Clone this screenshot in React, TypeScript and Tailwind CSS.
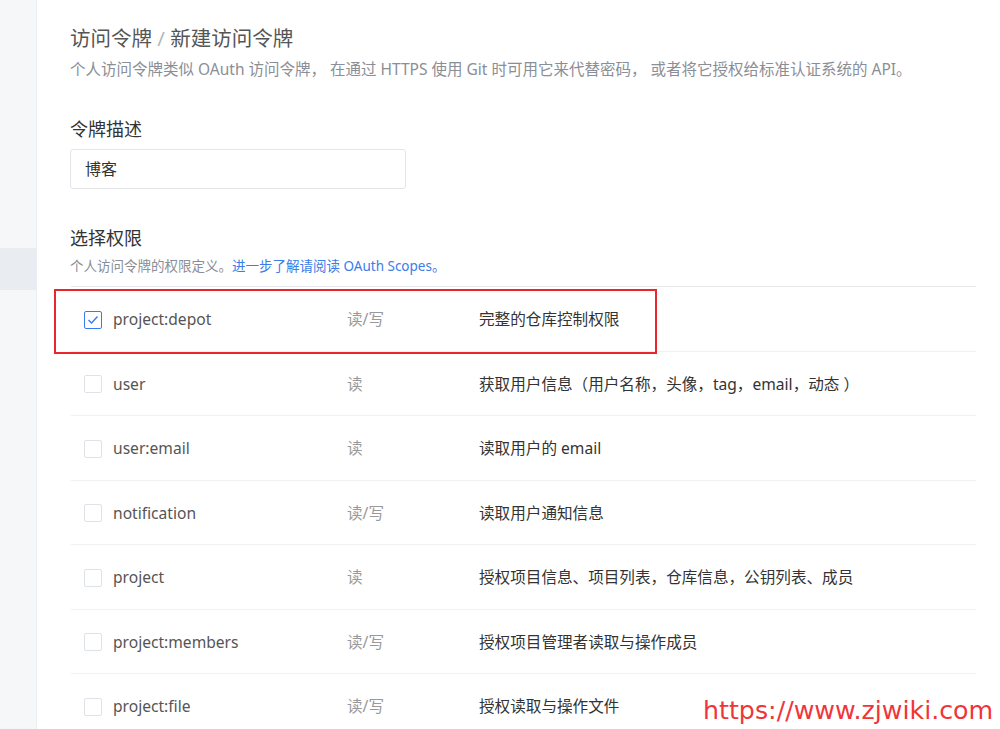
import React from "react";

const rows = [
  { name: "project:depot", access: "读/写", desc: "完整的仓库控制权限", checked: true },
  { name: "user", access: "读", desc: "获取用户信息（用户名称，头像，tag，email，动态 ）" },
  { name: "user:email", access: "读", desc: "读取用户的 email" },
  { name: "notification", access: "读/写", desc: "读取用户通知信息" },
  { name: "project", access: "读", desc: "授权项目信息、项目列表，仓库信息，公钥列表、成员" },
  { name: "project:members", access: "读/写", desc: "授权项目管理者读取与操作成员" },
  { name: "project:file", access: "读/写", desc: "授权读取与操作文件" },
];

export default function App() {
  return (
    <div
      className="relative flex w-[1000px] h-[729px] overflow-hidden bg-white"
      style={{ fontFamily: '"Noto Sans", "Noto Sans CJK SC", sans-serif' }}
    >
      <aside className="w-[37px] shrink-0 bg-[#f6f7f9] border-r border-[#ebedf0] flex flex-col">
        <div className="h-[248px]" />
        <div className="h-[42px] bg-[#e9ecf1]" />
      </aside>
      <main className="flex-1 pl-[33px] pr-[24px] pt-[24px]">
        <h1 className="text-[20.5px] leading-[28px] text-[#555]">
          访问令牌 <span className="text-[#b5b8bd]">/</span> 新建访问令牌
        </h1>
        <p className="mt-[6px] text-[15.5px] leading-[22px] text-[#8a8e96]">
          个人访问令牌类似 OAuth 访问令牌， 在通过 HTTPS 使用 Git 时可用它来代替密码， 或者将它授权给标准认证系统的 API。
        </p>
        <div className="mt-[37px] text-[18px] leading-[24px] text-[#333]">令牌描述</div>
        <div className="mt-[8px] w-[336px] h-[40px] border border-[#e3e5e9] rounded-[3px] flex items-center px-[14px] text-[16px] text-[#333]">
          博客
        </div>
        <div className="mt-[37px] text-[18px] leading-[24px] text-[#333]">选择权限</div>
        <p className="mt-[7px] text-[13.5px] leading-[18px] text-[#8a8e96]">
          个人访问令牌的权限定义。<span className="text-[#3b7ce9]">进一步了解请阅读 OAuth Scopes。</span>
        </p>
        <div className="mt-[11px] w-[905px] border-t border-[#e6e8eb] ml-px">
          {rows.map((r) => (
            <div
              key={r.name}
              className="h-[64.5px] pt-[2px] flex items-center border-b border-[#f0f1f3] text-[15.6px]"
            >
              <div className="w-[42px] pl-[13px]">
                {r.checked ? (
                  <div className="w-[18px] h-[18px] rounded-[2px] border border-[#3a7af0] flex items-center justify-center">
                    <svg width="12" height="10" viewBox="0 0 12 10" fill="none">
                      <path d="M1.5 5 L4.5 8 L10.5 1.5" stroke="#3a7af0" strokeWidth="1.4" />
                    </svg>
                  </div>
                ) : (
                  <div className="w-[18px] h-[18px] rounded-[2px] border border-[#dfe2e6]" />
                )}
              </div>
              <div className="w-[234px] text-[#555]">{r.name}</div>
              <div className="w-[132px] text-[#999]">{r.access}</div>
              <div className="text-[#333]">{r.desc}</div>
            </div>
          ))}
        </div>
      </main>
      <div className="absolute left-[54px] top-[289px] w-[603px] h-[65px] border-2 border-[#e8262d]" />
      <div
        className="absolute left-[703px] top-[694px] text-[25.3px] leading-[34px] text-[#f0353a]"
        style={{ fontFamily: '"DejaVu Sans", sans-serif' }}
      >
        https://www.zjwiki.com
      </div>
    </div>
  );
}
